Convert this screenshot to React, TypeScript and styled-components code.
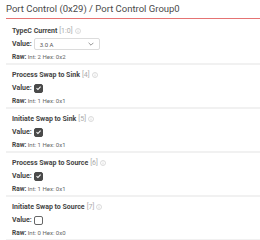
import React, { useState } from 'react';
import styled, { createGlobalStyle } from 'styled-components';

const GlobalStyle = createGlobalStyle`
  body {
    margin: 0;
    background: #ffffff;
    font-family: Roboto, "Liberation Sans", sans-serif;
    color: #333333;
  }
`;

interface iField {
  name: string;
  bits: string;
  kind: 'select' | 'check';
  value: number;
}

const fields: iField[] = [
  { name: 'TypeC Current', bits: '[1:0]', kind: 'select', value: 2 },
  { name: 'Process Swap to Sink', bits: '[4]', kind: 'check', value: 1 },
  { name: 'Initiate Swap to Sink', bits: '[5]', kind: 'check', value: 1 },
  { name: 'Process Swap to Source', bits: '[6]', kind: 'check', value: 1 },
  { name: 'Initiate Swap to Source', bits: '[7]', kind: 'check', value: 0 },
];

function InfoIcon() {
  return (
    <svg width="6" height="6" viewBox="0 0 12 12">
      <circle cx="6" cy="6" r="5" fill="none" stroke="#c4c4c4" strokeWidth="1.2" />
      <rect x="5.4" y="5" width="1.2" height="4" fill="#c4c4c4" />
      <rect x="5.4" y="3" width="1.2" height="1.2" fill="#c4c4c4" />
    </svg>
  );
}

function Field({ field }: { field: iField }) {
  const [value, setValue] = useState<number>(field.value);

  return (
    <Item>
      <FieldTitle>
        {field.name} <Bits>{field.bits}</Bits> <InfoIcon />
      </FieldTitle>
      <ValueRow>
        <Label>Value:</Label>
        {field.kind === 'select' ? (
          <Select>
            <span>3.0 A</span>
            <svg width="6" height="4" viewBox="0 0 10 6">
              <path d="M1 1l4 4 4-4" fill="none" stroke="#777" strokeWidth="1.3" />
            </svg>
          </Select>
        ) : (
          <Check checked={value === 1} onClick={() => setValue(value ? 0 : 1)}>
            {value === 1 && (
              <svg width="8" height="8" viewBox="0 0 10 10">
                <path d="M2.2 5.2l2 2 3.8-4.2" fill="none" stroke="#fff" strokeWidth="1.5" />
              </svg>
            )}
          </Check>
        )}
      </ValueRow>
      <Raw>
        <b>Raw:</b> Int: {value} Hex: 0x{value.toString(16)}
      </Raw>
    </Item>
  );
}

function App() {
  return (
    <Page>
      <GlobalStyle />
      <Header>Port Control (0x29) / Port Control Group0</Header>
      <List>
        {fields.map((f) => (
          <Field field={f} key={f.name} />
        ))}
      </List>
    </Page>
  );
}

const Page = styled.div`
  padding: 3px 0 0 6px;
`;

const Header = styled.div`
  font-size: 9.5px;
  line-height: 12px;
  color: #4a4a4a;
  padding-bottom: 3px;
  border-bottom: 1px solid #e57373;
`;

const List = styled.div`
  padding-top: 2px;
`;

const Item = styled.div`
  padding: 5px 6px 1px 6px;
  border-bottom: 2px solid #f1f1f1;
`;

const FieldTitle = styled.div`
  display: flex;
  align-items: center;
  gap: 2px;
  font-size: 7px;
  font-weight: 700;
  line-height: 10px;
  color: #444;
`;

const Bits = styled.span`
  font-weight: 400;
  color: #aaa;
`;

const ValueRow = styled.div`
  display: flex;
  align-items: center;
  gap: 2px;
  margin-top: 3px;
  height: 10px;
`;

const Label = styled.span`
  font-size: 7px;
  font-weight: 700;
  color: #444;
`;

const Select = styled.div`
  width: 66px;
  height: 12px;
  box-sizing: border-box;
  border: 1px solid #dcdcdc;
  border-radius: 2px;
  padding: 0 5px 0 5px;
  display: flex;
  align-items: center;
  justify-content: space-between;
  font-size: 6px;
  color: #555;
`;

const Check = styled.div<{ checked: boolean }>`
  width: 9px;
  height: 9px;
  box-sizing: border-box;
  border-radius: 2px;
  border: 1px solid ${(p) => (p.checked ? '#4a4a4a' : '#666')};
  background: ${(p) => (p.checked ? '#4a4a4a' : '#fff')};
  display: flex;
  align-items: center;
  justify-content: center;
  cursor: pointer;
`;

const Raw = styled.div`
  margin-top: 3px;
  font-size: 6px;
  line-height: 10px;
  color: #666;
  b {
    color: #444;
    font-size: 6.5px;
  }
`;

export default App;
